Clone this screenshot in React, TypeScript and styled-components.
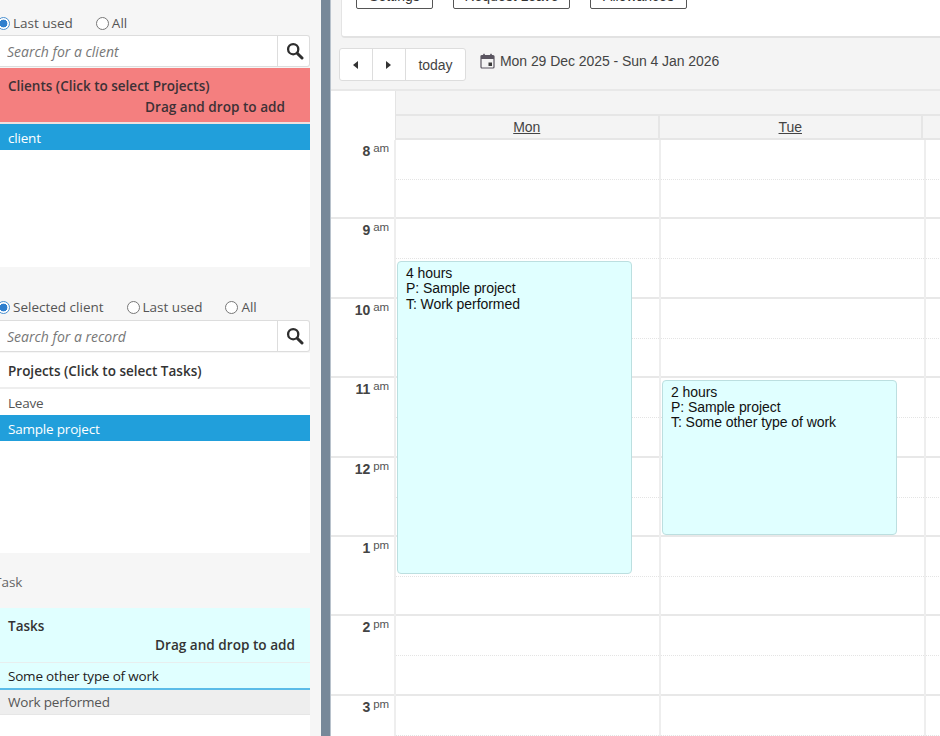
import React from "react";
import styled, { createGlobalStyle } from "styled-components";

const GlobalStyle = createGlobalStyle`
	html, body {
		margin: 0;
		padding: 0;
		height: 100%;
		overflow: hidden;
		background: #f6f6f6;
	}
`;

const hours = [
	["8", "am"],
	["9", "am"],
	["10", "am"],
	["11", "am"],
	["12", "pm"],
	["1", "pm"],
	["2", "pm"],
	["3", "pm"],
];

const SearchIcon = () => (
	<svg width="18" height="18" viewBox="0 0 18 18" fill="none" stroke="#2e2e2e" strokeLinecap="round">
		<circle cx="7.2" cy="7.2" r="5.1" strokeWidth="2.3" />
		<line x1="11.2" y1="11.2" x2="16" y2="16" strokeWidth="3" />
	</svg>
);

const CalendarIcon = () => (
	<svg width="15" height="16" viewBox="0 0 15 16" fill="none">
		<rect x="1" y="2.5" width="13" height="12.5" rx="1" stroke="#5a5560" strokeWidth="1.2" />
		<rect x="1" y="3" width="13" height="3" fill="#5a5560" />
		<rect x="3.2" y="0.8" width="1.6" height="3" fill="#5a5560" />
		<rect x="10.2" y="0.8" width="1.6" height="3" fill="#5a5560" />
		<rect x="8.5" y="9.5" width="3.5" height="3.5" fill="#3a3a3a" />
	</svg>
);

const Radio = ({ label, checked, name }: { label: string; checked?: boolean; name: string }) => (
	<RadioLabel>
		<RadioInput type="radio" name={name} defaultChecked={checked} />
		{label}
	</RadioLabel>
);

const SearchBox = ({ placeholder }: { placeholder: string }) => (
	<SearchWrap>
		<SearchInput placeholder={placeholder} />
		<SearchButton>
			<SearchIcon />
		</SearchButton>
	</SearchWrap>
);

const App = () => {
	return (
		<Page>
			<GlobalStyle />
			<Sidebar>
				<RadioRow $top={13} $bottom={2}>
					<Radio name="clients" label="Last used" checked />
					<Radio name="clients" label="All" />
				</RadioRow>
				<SearchBox placeholder="Search for a client" />
				<ListPanel $height={199}>
					<RedHeader>
						<HeaderTitle>Clients (Click to select Projects)</HeaderTitle>
						<DragHint $right={25} $lift={1}>
							Drag and drop to add
						</DragHint>
					</RedHeader>
					<SelectedRow>client</SelectedRow>
				</ListPanel>

				<RadioRow $top={30} $bottom={3}>
					<Radio name="projects" label="Selected client" checked />
					<Radio name="projects" label="Last used" />
					<Radio name="projects" label="All" />
				</RadioRow>
				<SearchBox placeholder="Search for a record" />
				<ListPanel $height={200}>
					<PlainHeader>
						<HeaderTitle>Projects (Click to select Tasks)</HeaderTitle>
					</PlainHeader>
					<ListRow>Leave</ListRow>
					<SelectedRow>Sample project</SelectedRow>
				</ListPanel>

				<TaskLabel>Task</TaskLabel>
				<ListPanel $height={128}>
					<CyanHeader>
						<HeaderTitle>Tasks</HeaderTitle>
						<DragHint $right={15} $lift={-1}>
							Drag and drop to add
						</DragHint>
					</CyanHeader>
					<CyanRow>Some other type of work</CyanRow>
					<GreyRow>Work performed</GreyRow>
				</ListPanel>
			</Sidebar>

			<Divider />

			<Main>
				<TopPanel>
					<ActionButton $width={77}>Settings</ActionButton>
					<ActionButton $width={117}>Request Leave</ActionButton>
					<ActionButton $width={97}>Allowances</ActionButton>
				</TopPanel>

				<Toolbar>
					<ButtonGroup>
						<NavButton aria-label="prev">
							<TriangleLeft />
						</NavButton>
						<NavButton aria-label="next">
							<TriangleRight />
						</NavButton>
						<TodayButton>today</TodayButton>
					</ButtonGroup>
					<DateRange>
						<CalendarIcon />
						Mon 29 Dec 2025 - Sun 4 Jan 2026
					</DateRange>
				</Toolbar>

				<CalendarHead>
					<AxisHead />
					<HeadRight>
						<AllDayBar />
						<DayHeads>
							<DayHead>
								<DayLink>Mon</DayLink>
							</DayHead>
							<DayHead>
								<DayLink>Tue</DayLink>
							</DayHead>
						</DayHeads>
					</HeadRight>
				</CalendarHead>

				<CalendarBody>
					<AxisColumn>
						{hours.map(([h, suffix]) => (
							<AxisSlot key={h}>
								<HourNumber>{h}</HourNumber>
								<HourSuffix>{suffix}</HourSuffix>
							</AxisSlot>
						))}
					</AxisColumn>
					<DayColumn>
						{hours.map(([h]) => (
							<HourSlot key={h} />
						))}
						<EventCard $top={121} $height={313}>
							4 hours
							<br />
							P: Sample project
							<br />
							T: Work performed
						</EventCard>
					</DayColumn>
					<DayColumn>
						{hours.map(([h]) => (
							<HourSlot key={h} />
						))}
						<EventCard $top={239.5} $height={155.5}>
							2 hours
							<br />
							P: Sample project
							<br />
							T: Some other type of work
						</EventCard>
					</DayColumn>
					<DayColumn>
						{hours.map(([h]) => (
							<HourSlot key={h} />
						))}
					</DayColumn>
				</CalendarBody>
			</Main>
		</Page>
	);
};

export default App;

const Page = styled.div`
	display: flex;
	width: 940px;
	height: 736px;
	overflow: hidden;
	background: #f6f6f6;
`;

const Sidebar = styled.div`
	flex: 0 0 310px;
	width: 310px;
	font-family: "Open Sans", "Noto Sans", sans-serif;
	font-size: 14px;
	color: #444;
`;

const RadioRow = styled.div<{ $top: number; $bottom: number }>`
	display: flex;
	gap: 23px;
	height: 20px;
	margin: ${(p) => p.$top}px 0 ${(p) => p.$bottom}px -3px;
	align-items: center;
`;

const RadioLabel = styled.label`
	display: flex;
	align-items: center;
	gap: 3px;
	font-size: 13.5px;
	color: #555;
`;

const RadioInput = styled.input`
	appearance: none;
	width: 13px;
	height: 13px;
	margin: 0;
	border: 1px solid #777;
	border-radius: 50%;
	background: #fff;

	&:checked {
		border-color: #4a90d0;
		background: radial-gradient(circle, #2f7fce 0 3.6px, #fff 4.2px);
	}
`;

const SearchWrap = styled.div`
	display: flex;
	height: 30px;
	width: 309px;
	box-sizing: content-box;
	border: 1px solid #ddd;
	border-left: none;
	border-radius: 0 3px 3px 0;
	background: #fff;
`;

const SearchInput = styled.input`
	flex: 1;
	min-width: 0;
	border: none;
	outline: none;
	padding: 0 0 0 7px;
	background: transparent;
	font-family: "Open Sans", "Noto Sans", sans-serif;
	font-size: 14px;

	&::placeholder {
		color: #777;
		font-style: italic;
		opacity: 1;
	}
`;

const SearchButton = styled.div`
	flex: 0 0 32px;
	box-sizing: border-box;
	display: flex;
	align-items: center;
	justify-content: center;
	padding-left: 3px;
	border-left: 1px solid #ddd;
`;

const ListPanel = styled.div<{ $height: number }>`
	height: ${(p) => p.$height}px;
	margin-top: 1px;
	background: #fff;
`;

const RedHeader = styled.div`
	height: 56px;
	box-sizing: border-box;
	padding: 8px 8px 0;
	background: #f47f7f;
	color: #3d3136;
	border-bottom: 2px solid #f0e0e0;
`;

const PlainHeader = styled.div`
	height: 36px;
	box-sizing: border-box;
	padding: 8px 8px 0;
	background: #fff;
	color: #333;
	border-bottom: 2px solid #eee;
`;

const CyanHeader = styled.div`
	height: 55px;
	box-sizing: border-box;
	padding: 8px 8px 0;
	background: #e0ffff;
	color: #333;
	border-bottom: 1px solid #e8eeee;
`;

const HeaderTitle = styled.div`
	font-weight: 600;
	font-size: 13.5px;
	line-height: 20px;
`;

const DragHint = styled.div<{ $right: number; $lift: number }>`
	font-weight: 600;
	font-size: 13.6px;
	line-height: 20px;
	text-align: right;
	margin-top: ${(p) => p.$lift}px;
	margin-right: ${(p) => p.$right - 8}px;
`;

const ListRow = styled.div`
	height: 26px;
	box-sizing: border-box;
	padding-left: 8px;
	line-height: 28px;
	font-size: 13.5px;
	letter-spacing: -0.2px;
	color: #555;
	background: #fff;
`;

const SelectedRow = styled(ListRow)`
	color: #fff;
	background: #219fdb;
`;

const CyanRow = styled(ListRow)`
	height: 27px;
	line-height: 26px;
	color: #222;
	background: #e0ffff;
	border-bottom: 2px solid #5bbce8;
`;

const GreyRow = styled(ListRow)`
	height: 25px;
	line-height: 25px;
	color: #555;
	background: #eee;
	border-bottom: 1px solid #e6e6e6;
`;

const TaskLabel = styled.div`
	height: 54px;
	line-height: 58px;
	margin-left: -6px;
	font-size: 13.5px;
	color: #666;
`;

const Divider = styled.div`
	flex: 0 0 9px;
	margin-left: 11px;
	background: #778899;
`;

const Main = styled.div`
	flex: 1;
	min-width: 0;
	background: #f4f4f4;
	border-left: 1px solid #b8c2cc;
	font-family: "Liberation Sans", Arial, sans-serif;
	font-size: 14px;
	letter-spacing: -0.06px;
	color: #444;
`;

const TopPanel = styled.div`
	display: flex;
	gap: 20px;
	height: 38px;
	box-sizing: border-box;
	margin-left: 10px;
	padding-left: 14px;
	background: #fff;
	border-left: 1px solid #e4e4e4;
	border-bottom: 2px solid #e2e2e2;
	border-bottom-left-radius: 4px;
	overflow: hidden;
`;

const ActionButton = styled.button<{ $width: number }>`
	width: ${(p) => p.$width}px;
	height: 26px;
	margin-top: -17px;
	padding: 0;
	background: #fff;
	border: 1px solid #555;
	border-radius: 2px;
	font-family: "Liberation Sans", Arial, sans-serif;
	font-size: 14px;
	color: #333;
`;

const Toolbar = styled.div`
	display: flex;
	align-items: flex-start;
	height: 51px;
	box-sizing: border-box;
	padding: 10px 0 0 8px;
`;

const ButtonGroup = styled.div`
	display: flex;
	height: 33px;
	box-sizing: border-box;
	background: #fff;
	border: 1px solid #ddd;
	border-radius: 3px;
`;

const NavButton = styled.div`
	width: 33px;
	box-sizing: border-box;
	display: flex;
	align-items: center;
	justify-content: center;
	padding-right: 1px;
	border-right: 1px solid #ddd;
`;

const TriangleLeft = styled.span`
	width: 0;
	height: 0;
	border-top: 4px solid transparent;
	border-bottom: 4px solid transparent;
	border-right: 5.5px solid #333;
`;

const TriangleRight = styled.span`
	width: 0;
	height: 0;
	border-top: 4px solid transparent;
	border-bottom: 4px solid transparent;
	border-left: 5.5px solid #333;
`;

const TodayButton = styled.div`
	width: 59px;
	display: flex;
	align-items: center;
	justify-content: center;
	color: #444;
`;

const DateRange = styled.div`
	display: flex;
	align-items: center;
	gap: 5px;
	height: 16px;
	margin: 5px 0 0 14px;
	color: #444;
`;

const CalendarHead = styled.div`
	display: flex;
	height: 51px;
	box-sizing: border-box;
	border-top: 2px solid #e8e8e8;
	border-bottom: 2px solid #e6e6e6;
`;

const AxisHead = styled.div`
	flex: 0 0 64px;
	margin-bottom: -2px;
	background: #fff;
`;

const HeadRight = styled.div`
	flex: 1;
	border-left: 1px solid #e4e4e4;
`;

const AllDayBar = styled.div`
	height: 25px;
	box-sizing: border-box;
	border-bottom: 2px solid #e6e6e6;
`;

const DayHeads = styled.div`
	display: flex;
	height: 22px;
`;

const DayHead = styled.div`
	flex: 0 0 263.5px;
	box-sizing: border-box;
	text-align: center;
	line-height: 22px;
	border-right: 2px solid #e6e6e6;
`;

const DayLink = styled.span`
	text-decoration: underline;
	color: #444;
`;

const CalendarBody = styled.div`
	display: flex;
	height: 600px;
	overflow: hidden;
	background: #fff;
`;

const AxisColumn = styled.div`
	flex: 0 0 63px;
`;

const AxisSlot = styled.div`
	display: flex;
	justify-content: flex-end;
	align-items: flex-start;
	gap: 3px;
	height: 79.4px;
	box-sizing: border-box;
	padding: 2px 5px 0 0;
	border-bottom: 2px solid #e8e8e8;
`;

const HourNumber = styled.span`
	font-size: 14px;
	font-weight: 700;
	line-height: 18px;
	color: #444;
`;

const HourSuffix = styled.span`
	font-size: 11.5px;
	line-height: 12px;
	color: #555;
`;

const DayColumn = styled.div`
	position: relative;
	flex: 0 0 265px;
	box-sizing: border-box;
	border-left: 2px solid #eee;
`;

const HourSlot = styled.div`
	position: relative;
	height: 79.4px;
	box-sizing: border-box;
	border-bottom: 2px solid #e8e8e8;

	&::before {
		content: "";
		display: block;
		height: 39px;
		border-bottom: 1px dotted #e4e4e4;
	}
`;

const EventCard = styled.div<{ $top: number; $height: number }>`
	position: absolute;
	top: ${(p) => p.$top}px;
	left: 1px;
	width: 235px;
	height: ${(p) => p.$height}px;
	box-sizing: border-box;
	padding: 4px 8px;
	background: #e0ffff;
	border: 1px solid #bcdfe0;
	border-radius: 4px;
	font-size: 14px;
	line-height: 15.4px;
	color: #111;
`;
